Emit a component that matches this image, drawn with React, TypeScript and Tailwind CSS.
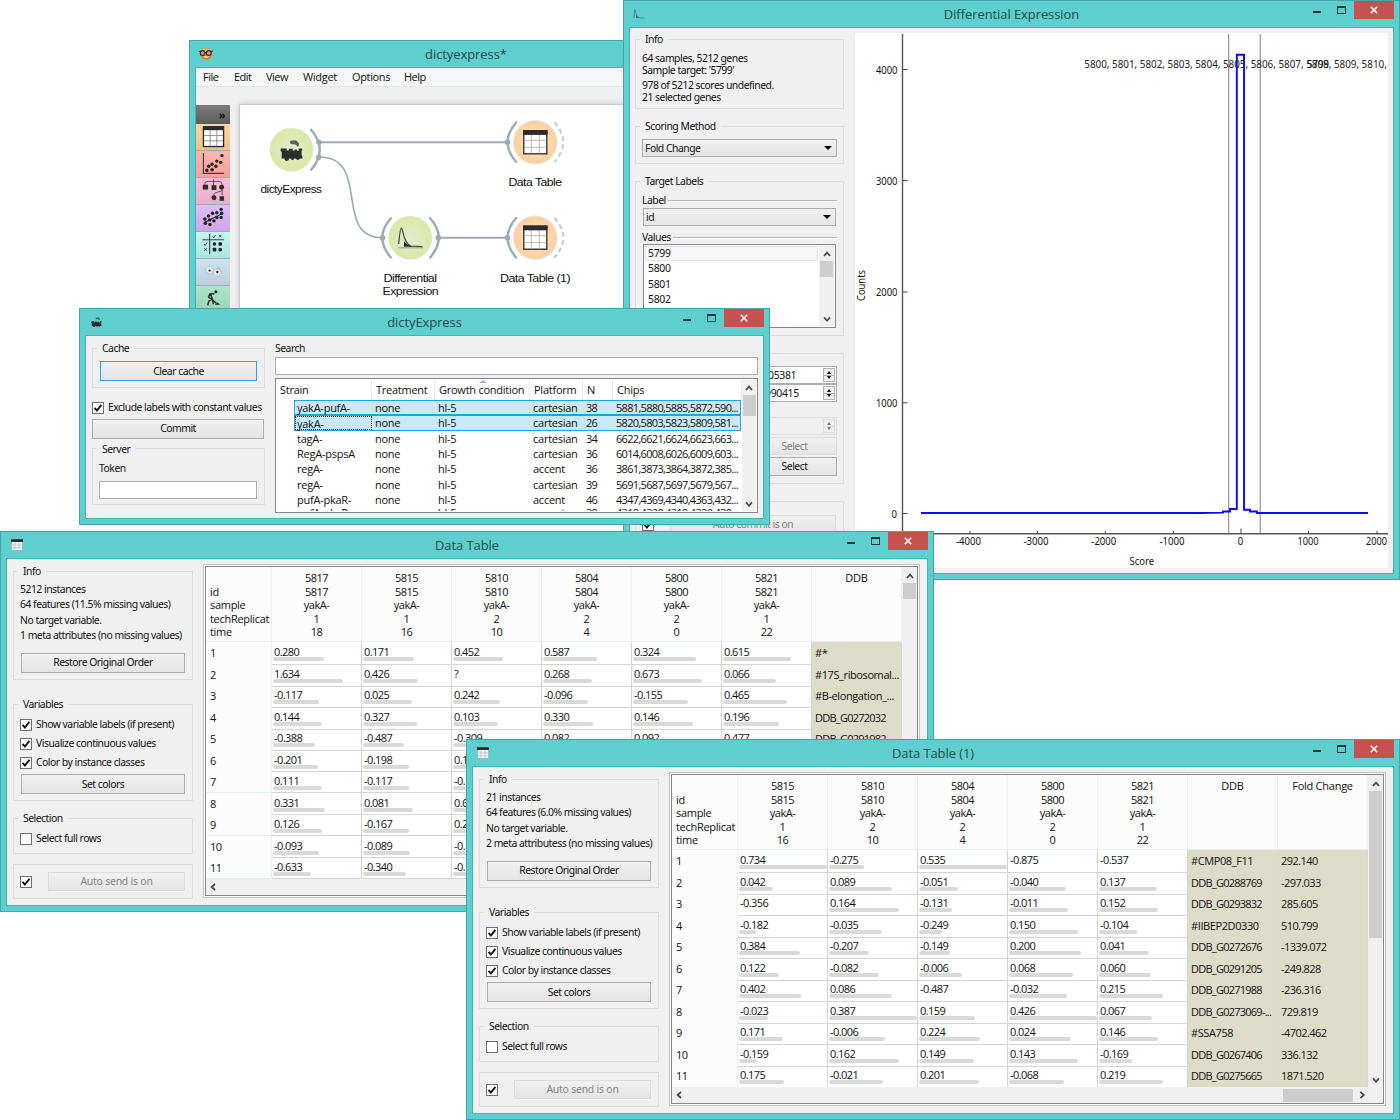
import type { ReactNode } from "react";

/* ---------- shared pieces ---------- */

function SmallTableIcon() {
  return (
    <svg viewBox="0 0 12 12" className="h-[12px] w-[12px]">
      <rect x="0.5" y="1" width="11" height="10.5" fill="#f4fbfb" stroke="#8fb3b3" strokeWidth="0.7" />
      <path d="M4 3V11.5M8 3V11.5M0.5 6H11.5M0.5 8.8H11.5" stroke="#a3bcbc" strokeWidth="0.7" />
      <rect x="0" y="0.3" width="12" height="2.6" fill="#222" />
    </svg>
  );
}

function Train() {
  return (
    <>
      <path
        d="M0 9H6V11H8.3V9.3H12V11H14V10H16.3V11.3H18V9H21.5V11H20.8V15L22 19H19A1.9 1.9 0 0 1 15.3 19H13.7A1.9 1.9 0 0 1 10 19H8.4A2.4 2.4 0 0 1 3.6 19H1V12H0Z"
        fill="#2d2d2d"
      />
      <path d="M9 3Q9 0.8 12 1Q16 0 17 2.5Q19 3.5 18 6.5L16.5 7Q16 5 13.5 4.8Q9.5 5 9 3Z" fill="#606158" />
    </>
  );
}

function TrainIcon() {
  return (
    <svg viewBox="0 0 22 21" className="ml-px h-[10px] w-[11px]">
      <Train />
    </svg>
  );
}

function CurveIcon() {
  return (
    <svg viewBox="0 0 12 12" className="-ml-px h-[12px] w-[12px]">
      <path d="M1 10 C1.5 3 1.5 0.5 2.3 2 C3 5 3.4 9 6 9.8 L11.5 10" fill="none" stroke="#3f7c7c" strokeWidth="0.8" />
      <path d="M3.3 7 Q4 9.5 6.5 9.6 L3.3 9.8Z" fill="#333" />
    </svg>
  );
}

function FaceIcon() {
  return (
    <svg viewBox="0 0 16 14" className="-ml-[2px] h-[14px] w-[16px]">
      <circle cx="8.4" cy="7" r="6" fill="#f08a24" />
      <ellipse cx="8" cy="3.6" rx="4" ry="2.2" fill="#fbb45c" />
      <path d="M4.8 9.6 Q8.2 13 11.8 9.6" fill="#fff" stroke="#b55410" strokeWidth="0.6" />
      <circle cx="4.6" cy="6" r="2.4" fill="#c9a27a" stroke="#2a2a2a" strokeWidth="1.1" />
      <circle cx="10.8" cy="6" r="2.4" fill="#c9a27a" stroke="#2a2a2a" strokeWidth="1.1" />
      <path d="M0.8 4.2L2.4 5M13 5L15 3.8M7 5.6H8.4" stroke="#2a2a2a" strokeWidth="1" />
    </svg>
  );
}

function AppWindow({
  place,
  title,
  icon,
  controls = true,
  children,
}: {
  place: string;
  title: string;
  icon: ReactNode;
  controls?: boolean;
  children: ReactNode;
}) {
  return (
    <section className={`absolute flex flex-col border border-[#47a5a6] bg-[#5ccfce] ${place}`}>
      <header className="flex h-[26px] shrink-0 items-start">
        <div className="flex h-[26px] w-[110px] items-center pl-[10px]">{icon}</div>
        <h2 className="flex-1 pt-[3px] text-center font-['Open_Sans',sans-serif] text-[13px] leading-[20px] tracking-[-0.08px] text-[#264748]">
          {title}
        </h2>
        <div className="flex h-[18px] w-[110px] items-start justify-end pr-[5px]">
          {controls && (
            <>
              <span className="mt-[10px] h-[2px] w-[8px] bg-[#1d3737]" />
              <span className="mt-[5px] mr-[8px] ml-[16px] h-[8px] w-[9px] border border-t-2 border-[#1d3737]" />
              <span className="flex h-[18px] w-[40px] items-center justify-center bg-[#c75050]">
                <svg viewBox="0 0 8 8" className="h-[8px] w-[8px]">
                  <path d="M0.8 0.8L7.2 7.2M7.2 0.8L0.8 7.2" stroke="#fff" strokeWidth="1.6" />
                </svg>
              </span>
            </>
          )}
        </div>
      </header>
      <div className="mx-[5px] mb-[5px] flex min-h-0 flex-1 overflow-hidden border border-[#45b3b3] bg-[#f0f0f0]">
        {children}
      </div>
    </section>
  );
}

function Group({ title, className, children }: { title: string; className: string; children: ReactNode }) {
  return (
    <fieldset className={`min-w-0 shrink-0 border border-[#dcdcdc] px-[6px] ${className}`}>
      <legend className="ml-[-2px] h-[14px] px-[5px] leading-[14px] whitespace-nowrap">{title}</legend>
      {children}
    </fieldset>
  );
}

function Btn({ className, children }: { className: string; children: ReactNode }) {
  return (
    <div
      className={`flex shrink-0 items-center justify-center border bg-linear-to-b from-[#f1f1f1] to-[#e4e4e4] pt-px whitespace-nowrap ${className}`}
    >
      {children}
    </div>
  );
}

function Box({ on }: { on: boolean }) {
  return (
    <span className="h-[12px] w-[12px] shrink-0 border border-[#707070] bg-white">
      {on && (
        <svg viewBox="0 0 10 10" className="h-[10px] w-[10px]">
          <path d="M1.6 4.8L3.9 7.6L8.4 1.8" fill="none" stroke="#111" strokeWidth="1.9" />
        </svg>
      )}
    </span>
  );
}

function Check({ on, className = "", children }: { on: boolean; className?: string; children?: ReactNode }) {
  return (
    <div className={`flex shrink-0 items-center gap-[4px] whitespace-nowrap ${className}`}>
      <Box on={on} />
      <span>{children}</span>
    </div>
  );
}

function Arrow({ dir }: { dir: "up" | "down" | "left" | "right" }) {
  const d = {
    up: "M1 6L4 2.6L7 6",
    down: "M1 2.4L4 5.8L7 2.4",
    left: "M6 1L2.6 4L6 7",
    right: "M2.4 1L5.8 4L2.4 7",
  }[dir];
  return (
    <svg viewBox="0 0 8 8" className="h-[8px] w-[8px] shrink-0">
      <path d={d} fill="none" stroke="#484848" strokeWidth="1.7" />
    </svg>
  );
}

function Combo({ className, children }: { className: string; children: ReactNode }) {
  return (
    <div
      className={`flex h-[18px] items-center justify-between border border-[#acacac] bg-linear-to-b from-[#f1f1f1] to-[#e4e4e4] pr-[4px] pl-[2px] ${className}`}
    >
      <span className="pt-px">{children}</span>
      <span className="h-0 w-0 border-x-[4px] border-t-[4px] border-x-transparent border-t-black" />
    </div>
  );
}

function Divider({ children }: { children: ReactNode }) {
  return (
    <div className="flex h-[14px] items-center gap-[2px]">
      <span>{children}</span>
      <span className="h-[2px] flex-1 border-t border-[#b4b4b4] bg-white" />
    </div>
  );
}

function Spin({ off = false, children }: { off?: boolean; children?: ReactNode }) {
  return (
    <div
      className={`flex h-[18px] items-center justify-between border ${off ? "border-[#dedede] bg-[#f0f0f0]" : "border-[#abadb3] bg-white"}`}
    >
      {children ?? <span />}
      <span
        className={`mr-px flex h-[14px] w-[12px] flex-col items-center justify-between border bg-[#f0f0f0] py-[2px] ${off ? "border-[#dedede]" : "border-[#b0b0b0]"}`}
      >
        <span className={`border-x-[2.5px] border-b-[3px] border-x-transparent ${off ? "border-b-[#777]" : "border-b-black"}`} />
        <span className={`h-px w-[12px] shrink-0 ${off ? "bg-[#dedede]" : "bg-[#b0b0b0]"}`} />
        <span className={`border-x-[2.5px] border-t-[3px] border-x-transparent ${off ? "border-t-[#777]" : "border-t-black"}`} />
      </span>
    </div>
  );
}

/* ---------- workflow canvas ---------- */

function SideCell({ tone, children }: { tone: string; children: ReactNode }) {
  return (
    <div className={`flex h-[27px] items-center justify-center border-b border-[#a9a9a9] bg-linear-to-b ${tone}`}>
      <svg viewBox="0 0 24 24" className="h-[23px] w-[23px]">
        {children}
      </svg>
    </div>
  );
}

const dots = (pts: number[][], r: number) => pts.map(([x, y]) => <circle key={`${x}-${y}`} cx={x} cy={y} r={r} />);

function Sidebar() {
  return (
    <div className="w-[34px] shrink-0 pt-[18px]">
      <div className="flex h-[18.5px] items-center justify-end bg-linear-to-b from-[#7b7b7b] to-[#5c5c5c] pr-[5px] font-['Open_Sans',sans-serif] text-[11px] leading-none font-bold text-[#151515]">
        »
      </div>
      <SideCell tone="from-[#fdd3a0] to-[#f6c084]">
        <rect x="1.5" y="2" width="21" height="20.5" fill="#fff" stroke="#2b2b2b" strokeWidth="1.4" />
        <path d="M8.5 5V22M15.5 5V22M2 11H22M2 16.5H22" stroke="#8e8e8e" strokeWidth="1" />
        <rect x="1" y="1.2" width="22" height="4.2" fill="#2b2b2b" />
      </SideCell>
      <SideCell tone="from-[#ffb5ad] to-[#f2a098]">
        <path d="M1.5 1V22.3H23" fill="none" stroke="#4b3a3a" strokeWidth="1.2" />
        <g fill="#222">
          {dots([[5, 19], [7, 14.8], [10.5, 18.5], [10.5, 12.8], [14.5, 14.8], [15.5, 9.5], [19.5, 10.8], [20.8, 3.8]], 1.8)}
        </g>
      </SideCell>
      <SideCell tone="from-[#f9c0da] to-[#ebacc9]">
        <path d="M3 7V5Q3 2.5 6 2.5H18Q21 2.5 21 6M12 0.5V7M12.5 18V16Q13 14 17 13.5Q21 13 21 11V17" fill="none" stroke="#4a4048" strokeWidth="0.9" />
        <g fill="#2d2d2d">
          <rect x="0.8" y="6" width="5.5" height="5" />
          <rect x="10" y="6.5" width="5" height="5" />
          <circle cx="20.5" cy="8.5" r="2.6" />
          <circle cx="12.5" cy="19.5" r="2.6" />
          <rect x="18.3" y="18" width="4.7" height="4.7" />
        </g>
      </SideCell>
      <SideCell tone="from-[#e2bcfb] to-[#cfa3ea]">
        <g fill="#1f1f1f">
          {dots([[3, 13.5], [3.5, 18], [8.3, 19.3], [8, 14.5], [6.8, 10.5], [11, 7.5], [12.5, 15.5], [15.5, 12], [15.5, 7], [20, 12], [20.5, 7.5], [20, 3.5]], 1.8)}
        </g>
        <path d="M2 17.5L22 7.5" stroke="#1f1f1f" strokeWidth="1.1" />
      </SideCell>
      <SideCell tone="from-[#c5f5f1] to-[#a9e6e1]">
        <path d="M0.5 7H23M8 1V22" stroke="#444" strokeWidth="1.2" />
        <path d="M11 3.5L12.3 5L14.2 2M2 11.5L3.3 13L5.3 10M17.8 2L20.3 4.5M20.3 2L17.8 4.5M2.5 16L5 18.5M5 16L2.5 18.5" stroke="#333" strokeWidth="0.9" fill="none" />
        <g fill="#222">
          <circle cx="13" cy="11.5" r="1.9" />
          <rect x="17.2" y="9.7" width="3.7" height="3.7" rx="0.8" />
          <rect x="11.2" y="15.5" width="3.7" height="3.7" rx="0.8" />
          <circle cx="19" cy="17.4" r="1.9" />
        </g>
      </SideCell>
      <SideCell tone="from-[#cfe3f1] to-[#b7cfdf]">
        <g fill="#e6e9ea" stroke="#a3adb3" strokeWidth="0.9">
          <circle cx="8" cy="10.5" r="4" strokeDasharray="1.8 1" />
          <circle cx="16" cy="13" r="4" strokeDasharray="1.8 1" />
        </g>
        <path d="M16 7.5L19 9" stroke="#99a3aa" />
        <circle cx="8" cy="11" r="1.2" fill="#222" />
        <circle cx="16" cy="12.5" r="1.2" fill="#222" />
      </SideCell>
      <SideCell tone="from-[#aee5c9] to-[#97d3b2]">
        <circle cx="14.5" cy="5" r="1.6" fill="#222" />
        <path d="M13 7L8.5 7L6.5 10.5M9 7.5L10.5 11.5L7 15L6 19M10.5 12L12 18M6.5 10L15 17" fill="none" stroke="#2a2a2a" strokeWidth="1.5" />
        <path d="M13.5 18.5L16 16L19 18.5Z" fill="#2a2a2a" />
      </SideCell>
    </div>
  );
}

function TableNode({ x, y }: { x: number; y: number }) {
  return (
    <g transform={`translate(${x} ${y})`}>
      <circle r="22.5" fill="#e6eef2" />
      <circle r="21.5" fill="url(#orange)" />
      <path d="M-18.5-20.5Q-37 0-18.5 20.5" fill="none" stroke="#9bacb5" strokeWidth="2.4" />
      <path d="M19-20Q37 0 19 20" fill="none" stroke="#c3cdd2" strokeWidth="2.2" strokeDasharray="5 3.2" />
      <circle cx="-27.8" r="2.8" fill="#9bacb5" />
      <rect x="-11.5" y="-11.5" width="23" height="23" fill="#fff" stroke="#333" strokeWidth="1.4" />
      <path d="M-4-8V11M4-8V11M-11-2H11M-11 5H11" stroke="#c4b6a6" strokeWidth="1" />
      <rect x="-12.2" y="-12.2" width="24.4" height="4.8" fill="#2b2b2b" />
    </g>
  );
}

function NodeLabel({ x, y, w, children }: { x: number; y: number; w: number; children: string }) {
  return (
    <text x={x - w / 2} y={y} textLength={w} lengthAdjust="spacingAndGlyphs">
      {children}
    </text>
  );
}

function Workflow() {
  return (
    <svg viewBox="240 105 385 206" className="h-[206px] w-[385px]">
      <defs>
        <radialGradient id="green">
          <stop offset="0" stopColor="#e3ebcf" />
          <stop offset="1" stopColor="#dbe8a6" />
        </radialGradient>
        <radialGradient id="orange">
          <stop offset="0" stopColor="#ffe6cc" />
          <stop offset="1" stopColor="#ffcf9c" />
        </radialGradient>
      </defs>
      <g fill="none" stroke="#9bacb5" strokeWidth="2">
        <path d="M319 142.3H507.5" />
        <path d="M319 157C372 157 332 237.7 382.5 237.7" strokeWidth="1.7" />
        <path d="M438 237.7H507.5" />
        <path d="M310.5 129Q329 150 310.5 170.5" strokeWidth="2.4" />
        <path d="M391.5 217.5Q373 237.7 391.5 258.2M429.5 217.5Q448 237.7 429.5 258.2" strokeWidth="2.4" />
      </g>
      <g fill="#9bacb5">
        <circle cx="319" cy="142.3" r="2.8" />
        <circle cx="318.7" cy="157.2" r="2.8" />
        <circle cx="382.5" cy="237.7" r="2.8" />
        <circle cx="438.3" cy="237.7" r="2.8" />
      </g>
      <circle cx="291.5" cy="149.7" r="22" fill="#e3e9dc" />
      <circle cx="291.5" cy="149.7" r="21.3" fill="url(#green)" />
      <g transform="translate(280.7 139.5)">
        <Train />
      </g>
      <circle cx="410.3" cy="237.7" r="22" fill="#e3e9dc" />
      <circle cx="410.3" cy="237.7" r="21.3" fill="url(#green)" />
      <path d="M398.7 244C399.5 236 400 228 401.5 228C403 228 403 244 411 246L422.5 246.6" fill="none" stroke="#444" strokeWidth="1.2" />
      <path d="M404 241Q407 246 415 246.8H404Z" fill="#222" />
      <path d="M398.5 247.8H423" stroke="#777" strokeWidth="0.7" />
      <TableNode x={535.3} y={142.3} />
      <TableNode x={535.3} y={237.7} />
      <g fontFamily="'Liberation Sans', sans-serif" fontSize="11" fill="#111">
        <NodeLabel x={291} y={193.3} w={61}>dictyExpress</NodeLabel>
        <NodeLabel x={535} y={186.3} w={53}>Data Table</NodeLabel>
        <NodeLabel x={410} y={282} w={53}>Differential</NodeLabel>
        <NodeLabel x={410.3} y={295.3} w={55.5}>Expression</NodeLabel>
        <NodeLabel x={535} y={282} w={70}>Data Table (1)</NodeLabel>
      </g>
    </svg>
  );
}

function WorkflowWindow() {
  return (
    <AppWindow place="left-[189px] top-[40px] h-[280px] w-[554px]" title="dictyexpress*" icon={<FaceIcon />} controls={false}>
      <div className="flex flex-1 flex-col">
        <nav className="flex h-[19px] shrink-0 items-center border-b border-[#e6e6e6] bg-[#f5f6f7] pl-[7px] font-['Open_Sans',sans-serif] text-[11px] text-[#111]">
          <span className="w-[31px]">File</span>
          <span className="w-[32px]">Edit</span>
          <span className="w-[37px]">View</span>
          <span className="w-[49px] tracking-[-0.3px]">Widget</span>
          <span className="w-[52px] tracking-[-0.35px]">Options</span>
          <span>Help</span>
        </nav>
        <div className="flex min-h-0 flex-1">
          <Sidebar />
          <div className="flex-1 pt-[17px] pl-[9px]">
            <div className="h-[240px] border-t border-l border-[#c9c9c9] bg-white shadow-[0_0_6px_rgba(0,0,0,0.18)]">
              <Workflow />
            </div>
          </div>
        </div>
      </div>
    </AppWindow>
  );
}

/* ---------- differential expression ---------- */

function Plot() {
  const ys: [string, number][] = [["4000", 69.5], ["3000", 180.5], ["2000", 292], ["1000", 402.8], ["0", 513.5]];
  const xs: [string, number, number][] = [
    ["-4000", 970, 25], ["-3000", 1037.5, 25], ["-2000", 1105.3, 25], ["-1000", 1173.5, 25],
    ["0", 1241, 5.5], ["1000", 1308.5, 21], ["2000", 1377, 21],
  ];
  return (
    <svg
      viewBox="855 33 533 535"
      className="h-[535px] w-[533px] bg-white tracking-normal"
      fontFamily="'Noto Sans', sans-serif"
      fontSize="10.4"
      fill="#111"
    >
      <path d="M902.5 34V534M902 533.7H1388" stroke="#555" strokeWidth="1.4" fill="none" />
      {ys.map(([t, y]) => (
        <g key={t}>
          <path d={`M903 ${y}H907.5`} stroke="#444" />
          <text x={t === "0" ? 891.5 : 876} y={y + 4} textLength={t === "0" ? 5.5 : 21.5} lengthAdjust="spacingAndGlyphs">
            {t}
          </text>
        </g>
      ))}
      {xs.map(([t, x, w]) => (
        <g key={t}>
          <path d={`M${x} 533V${t === "0" ? 528.5 : 531}`} stroke="#444" />
          <text x={x - w / 2 - (w === 25 ? 1.5 : 0.5)} y="544.8" textLength={w} lengthAdjust="spacingAndGlyphs">
            {t}
          </text>
        </g>
      ))}
      <text x="1129.5" y="565.3" textLength="24.5" lengthAdjust="spacingAndGlyphs">Score</text>
      <text transform="rotate(-90 864.8 301)" x="864.8" y="301" textLength="31" lengthAdjust="spacingAndGlyphs">Counts</text>
      <path d="M1228.7 34V533M1260.2 34V533" stroke="#8c8c8c" strokeWidth="1.1" />
      <path
        d="M921 513H1200L1223 512.6V511.5H1230V509H1236.8V54.8H1244V509.8H1250V511.5H1257V513H1368"
        fill="none"
        stroke="#0a0af5"
        strokeWidth="1.9"
      />
      <text x="1084.3" y="68.4" textLength="302.5" lengthAdjust="spacingAndGlyphs" fill="#222">
        5800, 5801, 5802, 5803, 5804, 5805, 5806, 5807, 5808, 5809, 5810,
      </text>
      <text x="1307" y="68.4" textLength="22" lengthAdjust="spacingAndGlyphs">5799</text>
    </svg>
  );
}

function DifferentialWindow() {
  return (
    <AppWindow place="left-[623px] top-0 h-[580px] w-[777px]" title="Differential Expression" icon={<CurveIcon />}>
      <div className="flex w-[225px] shrink-0 flex-col pt-[4px] pl-[5px]">
        <Group title="Info" className="h-[77px] w-[209px]">
          <div className="flex flex-col pt-[6px] leading-[12px] whitespace-nowrap">
            <span>64 samples, 5212 genes</span>
            <span>Sample target: '5799'</span>
            <span className="mt-[3px]">978 of 5212 scores undefined.</span>
            <span>21 selected genes</span>
          </div>
        </Group>
        <Group title="Scoring Method" className="mt-[10px] h-[45px] w-[209px]">
          <Combo className="mt-[6px] w-[195px]">Fold Change</Combo>
        </Group>
        <Group title="Target Labels" className="mt-[10px] h-[162px] w-[209px]">
          <div className="w-[195px] pt-[6px]">
            <Divider>Label</Divider>
            <Combo className="ml-px w-[193px]">id</Combo>
            <div className="pt-[5px]">
              <Divider>Values</Divider>
            </div>
            <div className="-mt-px ml-px flex h-[84px] w-[193px] border border-[#828790] bg-white p-px">
              <ul className="flex-1 overflow-hidden leading-[15.4px] tracking-[-0.3px]">
                {["5799", "5800", "5801", "5802", "5803"].map((v, i) => (
                  <li key={v} className={i === 0 ? "border border-[#e2e2e2] bg-[#f7f7f7] px-[2px] leading-[13.4px]" : "px-[3px]"}>
                    {v}
                  </li>
                ))}
              </ul>
              <div className="ml-px flex w-[15px] flex-col items-center bg-[#f0f0f0] pt-[4px] pb-[3px]">
                <Arrow dir="up" />
                <span className="mt-[3px] h-[16px] w-[13px] bg-[#cdcdcd]" />
                <span className="flex-1" />
                <Arrow dir="down" />
              </div>
            </div>
          </div>
        </Group>
        <Group title="Selection" className="mt-[10px] h-[138px] w-[209px]">
          <div className="flex w-[195px] flex-col pt-[6px]">
            <Spin>
              <span className="pt-[2px] pl-[125px] tracking-[-0.3px]">05381</span>
            </Spin>
            <Spin>
              <span className="pt-[2px] pl-[122px] tracking-[-0.3px]">990415</span>
            </Spin>
            <div className="pt-[15px]">
              <Spin off />
            </div>
            <Btn className="mt-[2px] ml-[110px] h-[18px] border-[#dcdcdc] text-[#838383]">Select</Btn>
            <Btn className="mt-[2px] ml-[110px] h-[19px] border-[#adadad]">Select</Btn>
          </div>
        </Group>
        <div className="mt-[17px] flex h-[50px] w-[209px] shrink-0 border border-[#dcdcdc] px-[6px] pt-[13px]">
          <div className="flex pt-[4px]">
            <Box on />
          </div>
          <Btn className="ml-[16px] h-[19px] w-[166px] border-[#dcdcdc] text-[#838383]">Auto commit is on</Btn>
        </div>
      </div>
      <div className="pt-[5px]">
        <Plot />
      </div>
    </AppWindow>
  );
}

/* ---------- dictyExpress ---------- */

const STRAINS = [
  ["yakA-pufA-", "none", "hl-5", "cartesian", "38", "5881,5880,5885,5872,590..."],
  ["yakA-", "none", "hl-5", "cartesian", "26", "5820,5803,5823,5809,581..."],
  ["tagA-", "none", "hl-5", "cartesian", "34", "6622,6621,6624,6623,663..."],
  ["RegA-pspsA", "none", "hl-5", "cartesian", "36", "6014,6008,6026,6009,603..."],
  ["regA-", "none", "hl-5", "accent", "36", "3861,3873,3864,3872,385..."],
  ["regA-", "none", "hl-5", "cartesian", "39", "5691,5687,5697,5679,567..."],
  ["pufA-pkaR-", "none", "hl-5", "accent", "46", "4347,4369,4340,4363,432..."],
  ["pufA-pkaR-", "none", "hl-5", "accent", "38", "4318,4320,4319,4330,430..."],
];

function StrainTable() {
  return (
    <div className="mt-[3px] flex h-[135px] w-[483px] border border-[#828790] bg-white py-px pr-px">
      <div className="flex min-w-0 flex-1 flex-col overflow-hidden font-['Open_Sans',sans-serif] text-[11px] tracking-[-0.25px]">
        <div className="grid h-[20px] shrink-0 grid-cols-[96px_63px_95px_53px_30px_1fr] items-stretch leading-[20px] whitespace-nowrap">
          {["Strain", "Treatment", "Growth condition", "Platform", "N", "Chips"].map((h, i) => (
            <span key={h} className="relative border-r border-[#e4ecf4] pl-[4px]">
              {h}
              {i === 2 && (
                <span className="absolute top-0 left-[44px] border-x-[4px] border-b-[3px] border-x-transparent border-b-[#8fb8cc]" />
              )}
            </span>
          ))}
        </div>
        {STRAINS.map((row, i) => (
          <div
            key={i}
            className={`ml-[18px] grid h-[15.35px] w-[447px] shrink-0 grid-cols-[78px_63px_95px_53px_30px_1fr] border leading-[13.6px] whitespace-nowrap ${i < 2 ? "border-[#26a0da] bg-[#cbe8f6]" : "border-transparent"} ${i === 7 ? "-mt-[2px]" : ""}`}
          >
            {row.map((c, j) => (
              <span
                key={j}
                className={
                  i === 1 && j === 0
                    ? "mr-px flex h-[14px] items-center border border-dotted border-[#222] pl-px"
                    : j > 3
                      ? "pl-[2px] tracking-[-0.68px]"
                      : "pl-[2px]"
                }
              >
                {c}
              </span>
            ))}
          </div>
        ))}
      </div>
      <div className="flex w-[14px] flex-col items-center bg-[#f0f0f0] pt-[4px] pb-[3px]">
        <Arrow dir="up" />
        <span className="mt-[3px] h-[21px] w-[13px] bg-[#cdcdcd]" />
        <span className="flex-1" />
        <Arrow dir="down" />
      </div>
    </div>
  );
}

function DictyWindow() {
  return (
    <AppWindow place="left-[79px] top-[308px] h-[217px] w-[691px]" title="dictyExpress" icon={<TrainIcon />}>
      <div className="flex w-[189px] shrink-0 flex-col pt-[5px] pl-[6px]">
        <Group title="Cache" className="h-[47px] w-[173px]">
          <Btn className="mt-[6px] ml-px h-[20px] w-[157px] border-[#3f97ea]">Clear cache</Btn>
        </Group>
        <Check on className="mt-[12px]">
          Exclude labels with constant values
        </Check>
        <Btn className="mt-[3px] h-[20px] w-[172px] border-[#adadad]">Commit</Btn>
        <Group title="Server" className="mt-[3px] h-[63px] w-[173px]">
          <div className="pt-[5px] leading-[14px]">Token</div>
          <div className="mt-[6px] h-[18px] w-[158px] border border-[#abadb3] bg-white" />
        </Group>
      </div>
      <div className="flex flex-col pt-[5px]">
        <span className="h-[16px] leading-[14px]">Search</span>
        <div className="h-[18px] w-[483px] border border-[#abadb3] bg-white" />
        <StrainTable />
      </div>
    </AppWindow>
  );
}

/* ---------- data tables ---------- */

type Cell = [string, number];
type Data = {
  info: string[];
  heads: string[][];
  metas: string[];
  rows: { cells: Cell[]; metas: string[] }[];
  thumb: string;
  hthumb: boolean;
};

const FIRST: Data = {
  info: ["5212 instances", "64 features (11.5% missing values)", "No target variable.", "1 meta attributes (no missing values)"],
  heads: [
    ["5817", "5817", "yakA-", "1", "18"],
    ["5815", "5815", "yakA-", "1", "16"],
    ["5810", "5810", "yakA-", "2", "10"],
    ["5804", "5804", "yakA-", "2", "4"],
    ["5800", "5800", "yakA-", "2", "0"],
    ["5821", "5821", "yakA-", "1", "22"],
  ],
  metas: ["DDB"],
  rows: [
    { cells: [["0.280", 51], ["0.171", 51], ["0.452", 50], ["0.587", 53.5], ["0.324", 62.5], ["0.615", 67.5]], metas: ["#*"] },
    { cells: [["1.634", 70], ["0.426", 55], ["?", 0], ["0.268", 49], ["0.673", 68.5], ["0.066", 52.5]], metas: ["#17S_ribosomal..."] },
    { cells: [["-0.117", 46], ["0.025", 49], ["0.242", 46.5], ["-0.096", 44.5], ["-0.155", 55], ["0.465", 64]], metas: ["#B-elongation_..."] },
    { cells: [["0.144", 49], ["0.327", 54], ["0.103", 45], ["0.330", 49.5], ["0.146", 59.5], ["0.196", 56]], metas: ["DDB_G0272032"] },
    { cells: [["-0.388", 42], ["-0.487", 41], ["-0.309", 38], ["0.082", 47], ["0.092", 58], ["0.477", 64]], metas: ["DDB_G0291982"] },
    { cells: [["-0.201", 45], ["-0.198", 46], ["0.1", 45], ["", 0], ["", 0], ["", 0]], metas: [""] },
    { cells: [["0.111", 49], ["-0.117", 46], ["-0.", 42], ["", 0], ["", 0], ["", 0]], metas: [""] },
    { cells: [["0.331", 52], ["0.081", 50], ["0.6", 52], ["", 0], ["", 0], ["", 0]], metas: [""] },
    { cells: [["0.126", 49], ["-0.167", 46], ["0.2", 47], ["", 0], ["", 0], ["", 0]], metas: [""] },
    { cells: [["-0.093", 46], ["-0.089", 47], ["-0.", 42], ["", 0], ["", 0], ["", 0]], metas: [""] },
    { cells: [["-0.633", 38], ["-0.340", 43], ["-0.", 42], ["", 0], ["", 0], ["", 0]], metas: [""] },
  ],
  thumb: "h-[16px]",
  hthumb: false,
};

const SECOND: Data = {
  info: ["21 instances", "64 features (6.0% missing values)", "No target variable.", "2 meta attributess (no missing values)"],
  heads: FIRST.heads.slice(1),
  metas: ["DDB", "Fold Change"],
  rows: [
    { cells: [["0.734", 88], ["-0.275", 34.5], ["0.535", 88], ["-0.875", 0], ["-0.537", 0]], metas: ["#CMP08_F11", "292.140"] },
    { cells: [["0.042", 33.5], ["0.089", 63], ["-0.051", 38.5], ["-0.040", 57], ["0.137", 57.5]], metas: ["DDB_G0288769", "-297.033"] },
    { cells: [["-0.356", 0], ["0.164", 69.5], ["-0.131", 32.5], ["-0.011", 58.5], ["0.152", 58.5]], metas: ["DDB_G0293832", "285.605"] },
    { cells: [["-0.182", 16.5], ["-0.035", 53], ["-0.249", 22.5], ["0.150", 69], ["-0.104", 38]], metas: ["#IIBEP2D0330", "510.799"] },
    { cells: [["0.384", 60.5], ["-0.207", 39.5], ["-0.149", 30.5], ["0.200", 72], ["0.041", 49.5]], metas: ["DDB_G0272676", "-1339.072"] },
    { cells: [["0.122", 40], ["-0.082", 49.5], ["-0.006", 42.5], ["0.068", 64], ["0.060", 51.5]], metas: ["DDB_G0291205", "-249.828"] },
    { cells: [["0.402", 61.5], ["0.086", 63], ["-0.487", 0], ["-0.032", 58], ["0.215", 64]], metas: ["DDB_G0271988", "-236.316"] },
    { cells: [["-0.023", 29], ["0.387", 88], ["0.159", 56], ["0.426", 88], ["0.067", 52.5]], metas: ["DDB_G0273069-...", "729.819"] },
    { cells: [["0.171", 43.5], ["-0.006", 56], ["0.224", 61], ["0.024", 61.5], ["0.146", 58.5]], metas: ["#SSA758", "-4702.462"] },
    { cells: [["-0.159", 18], ["0.162", 69.5], ["0.149", 55], ["0.143", 68.5], ["-0.169", 32.5]], metas: ["DDB_G0267406", "336.132"] },
    { cells: [["0.175", 44.5], ["-0.021", 54], ["0.201", 59.5], ["-0.068", 55], ["0.219", 64]], metas: ["DDB_G0275665", "1871.520"] },
  ],
  thumb: "h-[147px]",
  hthumb: true,
};

const GRID = "grid grid-cols-[66px_repeat(7,90px)]";

function DataGrid({ data }: { data: Data }) {
  return (
    <div className="h-[334px] w-[717px] border border-[#c4c4c4] bg-white p-px">
      <div className="flex h-full flex-col border border-[#828790] font-['Open_Sans',sans-serif] text-[11px]">
        <div className="flex h-[312px] shrink-0">
          <div className="w-[696px] shrink-0">
            <div className={`${GRID} h-[75px] bg-[#fcfcfc] leading-[13.6px]`}>
              <div className="flex flex-col border-r border-b border-[#e6eef8] pt-[17.6px] pl-[4px] tracking-[-0.3px] whitespace-nowrap">
                <span>id</span>
                <span>sample</span>
                <span>techReplicat</span>
                <span>time</span>
              </div>
              {data.heads.map((h, i) => (
                <div key={i} className="flex flex-col items-center border-r border-b border-[#e6eef8] pt-[4px] tracking-[-0.5px]">
                  {h.map((t, j) => (
                    <span key={j}>{t}</span>
                  ))}
                </div>
              ))}
              {data.metas.map((m) => (
                <div key={m} className="border-r border-b border-[#e6eef8] pt-[4px] text-center tracking-[-0.25px]">
                  {m}
                </div>
              ))}
            </div>
            {data.rows.map((r, i) => (
              <div key={i} className={`${GRID} h-[21.55px] whitespace-nowrap`}>
                <div className="border-r border-b border-[#e6eef8] bg-[#fcfcfc] pl-[4px] leading-[21px]">{i + 1}</div>
                {r.cells.map(([v, w], j) => (
                  <div key={j} className="flex flex-col overflow-hidden border-r border-b border-[#d4d4d4] pl-px">
                    <span className="h-[15px] pl-px leading-[19px] tracking-[-0.55px]">{v}</span>
                    <span className="h-[4px] shrink-0 rounded-full bg-[#d9d9d9]" style={{ width: w }} />
                  </div>
                ))}
                {r.metas.map((m, j) => (
                  <div
                    key={j}
                    className={`border-r border-b border-[#d8d8cd] bg-[#dcdcc8] pl-[3px] leading-[22px] ${j === 1 ? "tracking-[-0.55px]" : m.startsWith("#") ? "tracking-[-0.4px]" : "tracking-[-0.75px]"}`}
                  >
                    {m}
                  </div>
                ))}
              </div>
            ))}
          </div>
          <div className="flex flex-1 flex-col items-center bg-[#f0f0f0] pt-[5px] pb-[3px]">
            <Arrow dir="up" />
            <span className={`mt-[3px] w-[13px] bg-[#cdcdcd] ${data.thumb}`} />
            <span className="flex-1" />
            <Arrow dir="down" />
          </div>
        </div>
        <div className="flex flex-1 items-center bg-[#f0f0f0] pr-[17px] pl-[3px]">
          <Arrow dir="left" />
          <span className="flex-1" />
          {data.hthumb && (
            <>
              <span className="mr-[5px] h-[13px] w-[70px] bg-[#cdcdcd]" />
              <Arrow dir="right" />
            </>
          )}
        </div>
      </div>
    </div>
  );
}

function DataWindow({ place, title, data }: { place: string; title: string; data: Data }) {
  return (
    <AppWindow place={place} title={title} icon={<SmallTableIcon />}>
      <div className="flex w-[196px] shrink-0 flex-col pt-[5px] pl-[6px]">
        <Group title="Info" className="h-[116px] w-[180px]">
          <div className="flex flex-col pt-[4px] leading-[15.4px] whitespace-nowrap">
            {data.info.map((t) => (
              <span key={t}>{t}</span>
            ))}
          </div>
          <Btn className="mt-[9px] ml-px h-[20px] w-[164px] border-[#adadad]">Restore Original Order</Btn>
        </Group>
        <Group title="Variables" className="mt-[17px] h-[104px] w-[180px]">
          <Check on className="mt-[4px] h-[19px]">Show variable labels (if present)</Check>
          <Check on className="h-[19px]">Visualize continuous values</Check>
          <Check on className="h-[19px]">Color by instance classes</Check>
          <Btn className="mt-[2px] ml-px h-[20px] w-[164px] border-[#adadad]">Set colors</Btn>
        </Group>
        <Group title="Selection" className="mt-[10px] h-[43px] w-[180px]">
          <Check on={false} className="mt-[4px] h-[19px]">Select full rows</Check>
        </Group>
        <div className="mt-[10px] flex h-[35px] w-[180px] shrink-0 items-center border border-[#dcdcdc] px-[6px]">
          <Box on />
          <Btn className="ml-[16px] h-[19px] w-[137px] border-[#dcdcdc] tracking-[-0.2px] text-[#838383]">Auto send is on</Btn>
        </div>
      </div>
      <div className="pt-[5px]">
        <DataGrid data={data} />
      </div>
    </AppWindow>
  );
}

export default function App() {
  return (
    <main className="relative h-[1120px] w-[1400px] overflow-hidden bg-white font-['Noto_Sans',sans-serif] text-[10.4px] tracking-[-0.5px] text-[#111]">
      <WorkflowWindow />
      <DifferentialWindow />
      <DictyWindow />
      <DataWindow place="left-0 top-[531px] h-[381px] w-[934px]" title="Data Table" data={FIRST} />
      <DataWindow place="left-[466px] top-[739px] h-[381px] w-[934px]" title="Data Table (1)" data={SECOND} />
    </main>
  );
}
